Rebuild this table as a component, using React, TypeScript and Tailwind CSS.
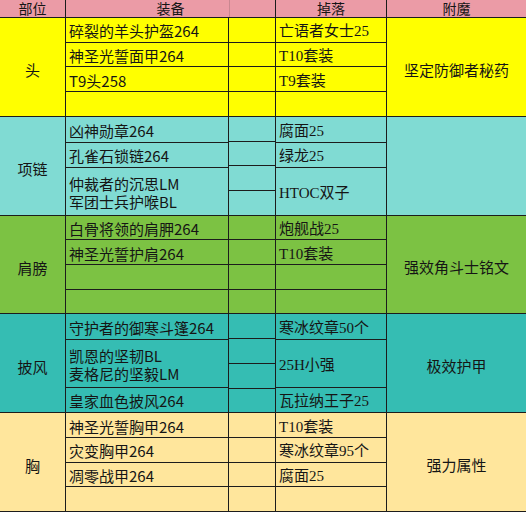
type Cell = { lines: string[]; span?: number }

interface Group {
  name: string
  bg: string
  equip: Cell[]
  drops: Cell[]
  enchant: string
}

const c = (text: string, span = 1): Cell => ({ lines: text ? [text] : [], span })

const groups: Group[] = [
  {
    name: '头',
    bg: 'bg-[#ffff00]',
    equip: [c('碎裂的羊头护盔264'), c('神圣光誓面甲264'), c('T9头258'), c('')],
    drops: [c('亡语者女士25'), c('T10套装'), c('T9套装'), c('')],
    enchant: '坚定防御者秘药',
  },
  {
    name: '项链',
    bg: 'bg-[#80dbd3]',
    equip: [c('凶神勋章264'), c('孔雀石锁链264'), { lines: ['仲裁者的沉思LM', '军团士兵护喉BL'], span: 2 }],
    drops: [c('腐面25'), c('绿龙25'), c('HTOC双子', 2)],
    enchant: '',
  },
  {
    name: '肩膀',
    bg: 'bg-[#7cc243]',
    equip: [c('白骨将领的肩胛264'), c('神圣光誓护肩264'), c(''), c('')],
    drops: [c('炮舰战25'), c('T10套装'), c(''), c('')],
    enchant: '强效角斗士铭文',
  },
  {
    name: '披风',
    bg: 'bg-[#35bdb3]',
    equip: [c('守护者的御寒斗篷264'), { lines: ['凯恩的坚韧BL', '麦格尼的坚毅LM'], span: 2 }, c('皇家血色披风264')],
    drops: [c('寒冰纹章50个'), c('25H小强', 2), c('瓦拉纳王子25')],
    enchant: '极效护甲',
  },
  {
    name: '胸',
    bg: 'bg-[#ffe69c]',
    equip: [c('神圣光誓胸甲264'), c('灾变胸甲264'), c('凋零战甲264'), c('')],
    drops: [c('T10套装'), c('寒冰纹章95个'), c('腐面25'), c('')],
    enchant: '强力属性',
  },
]

function ListColumn({ cells, width, serif }: { cells: Cell[]; width: string; serif?: boolean }) {
  return (
    <div className={`${width} flex shrink-0 flex-col divide-y divide-[#1c1c1c] border-r border-[#1c1c1c]`}>
      {cells.map((cell, i) => (
        <div
          key={i}
          className={`flex min-h-0 basis-0 flex-col justify-center pl-[3px] pt-[3px] ${
            cell.span === 2 ? 'grow-[2]' : 'grow'
          } ${serif ? "font-['Liberation_Serif','Noto_Sans_CJK_SC',serif]" : ''}`}
        >
          {cell.lines.map((line) => (
            <p key={line} className="whitespace-nowrap leading-[18px]">
              {line}
            </p>
          ))}
        </div>
      ))}
    </div>
  )
}

function GroupRow({ group }: { group: Group }) {
  const spacer: Cell[] = [c(''), c(''), c(''), c('')]
  return (
    <div className={`flex h-[98.8px] border-b border-[#1c1c1c] ${group.bg}`}>
      <div className="flex w-[66px] shrink-0 items-center justify-center border-r border-[#1c1c1c] pt-[6px]">
        {group.name}
      </div>
      <ListColumn cells={group.equip} width="w-[163px]" />
      <ListColumn cells={spacer} width="w-[47px]" />
      <ListColumn cells={group.drops} width="w-[111px]" serif />
      <div className="flex flex-1 items-center justify-center pt-[5px]">{group.enchant}</div>
    </div>
  )
}

export default function App() {
  return (
    <div className="w-[526px] h-[513px] bg-white font-['Noto_Sans_CJK_SC',sans-serif] text-[15px] leading-none text-[#151515]">
      <div className="flex h-[18px] border-b border-[#1c1c1c] bg-[#eb9ba6] text-[14px] leading-[17px]">
        <div className="w-[66px] shrink-0 border-r border-[#1c1c1c] text-center">部位</div>
        <div className="w-[210px] shrink-0 border-r border-[#1c1c1c] bg-[linear-gradient(to_right,transparent_163px,#c98790_163px,#c98790_164px,transparent_164px)] text-center">
          装备
        </div>
        <div className="w-[111px] shrink-0 border-r border-[#1c1c1c] text-center">掉落</div>
        <div className="flex-1 text-center">附魔</div>
      </div>
      {groups.map((g) => (
        <GroupRow key={g.name} group={g} />
      ))}
    </div>
  )
}
